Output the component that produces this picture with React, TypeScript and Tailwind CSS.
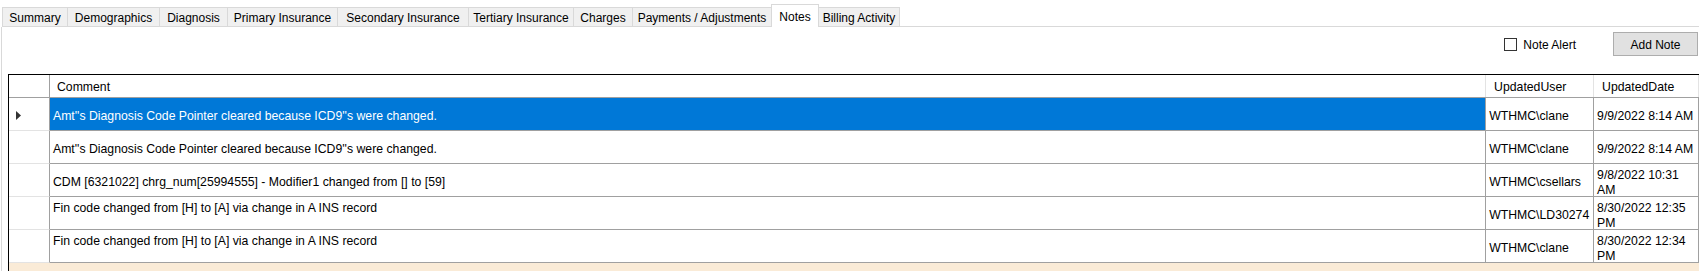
import React from "react";

const tabs: { label: string; w: string; first?: boolean; sel?: boolean }[] = [
  { label: "Summary", w: "w-[66px]", first: true },
  { label: "Demographics", w: "w-[92px]" },
  { label: "Diagnosis", w: "w-[68px]" },
  { label: "Primary Insurance", w: "w-[110px]" },
  { label: "Secondary Insurance", w: "w-[131px]" },
  { label: "Tertiary Insurance", w: "w-[105px]" },
  { label: "Charges", w: "w-[59px]" },
  { label: "Payments / Adjustments", w: "w-[139px]" },
  { label: "Notes", w: "w-[48px]", sel: true },
  { label: "Billing Activity", w: "w-[81px]" },
];

type Row = { comment: string[]; user: string; date: string[]; selected?: boolean };

const rows: Row[] = [
  { comment: ["Amt''s Diagnosis Code Pointer cleared because ICD9''s were changed."], user: "WTHMC\\clane", date: ["9/9/2022 8:14 AM"], selected: true },
  { comment: ["Amt''s Diagnosis Code Pointer cleared because ICD9''s were changed."], user: "WTHMC\\clane", date: ["9/9/2022 8:14 AM"] },
  { comment: ["CDM [6321022] chrg_num[25994555] - Modifier1 changed from [] to [59]"], user: "WTHMC\\csellars", date: ["9/8/2022 10:31", "AM"] },
  { comment: ["Fin code changed from [H] to [A] via change in A INS record", "\u00a0"], user: "WTHMC\\LD30274", date: ["8/30/2022 12:35", "PM"] },
  { comment: ["Fin code changed from [H] to [A] via change in A INS record", "\u00a0"], user: "WTHMC\\clane", date: ["8/30/2022 12:34", "PM"] },
];

function Lines({ lines }: { lines: string[] }) {
  return (
    <div className="flex flex-col leading-[15px] whitespace-nowrap">
      {lines.map((l, i) => (
        <span key={i}>{l}</span>
      ))}
    </div>
  );
}

export default function App() {
  return (
    <div className="w-[1699px] h-[271px] overflow-hidden bg-white text-[12px] text-black font-['Liberation_Sans',Arial,sans-serif] flex flex-col">
      {/* Tab strip */}
      <div className="flex items-end h-[27px] pl-[2px] shrink-0">
        {tabs.map((t) =>
          t.sel ? (
            <div
              key={t.label}
              className={`${t.w} h-[23px] bg-white border-t border-l border-r border-[#d9d9d9] flex items-start justify-center pt-[3px] -ml-px`}
            >
              {t.label}
            </div>
          ) : (
            <div
              key={t.label}
              className={`${t.w} h-[20px] bg-[#f0f0f0] border-t border-r border-b border-[#d9d9d9] ${t.first ? "border-l" : ""} flex items-center justify-center pt-[2px]`}
            >
              {t.label}
            </div>
          )
        )}
        <div className="flex-1 h-full border-b border-[#d9d9d9]" />
      </div>

      {/* Panel */}
      <div className="flex-1 ml-px border-l border-[#d9d9d9] flex flex-col min-h-0">
        {/* Toolbar */}
        <div className="h-[47px] shrink-0 flex justify-end items-start pt-[5px] pr-px">
          <div className="flex items-center h-[24px]">
            <div className="w-[13px] h-[13px] border border-[#333333] bg-white" />
            <span className="ml-[6px] pt-[2px]">Note Alert</span>
            <button className="ml-[37px] w-[85px] h-[24px] bg-[#e1e1e1] border border-[#adadad] flex items-center justify-center pt-[1px]">
              Add Note
            </button>
          </div>
        </div>

        {/* Grid */}
        <div className="ml-[6px] flex-1 border-t border-l border-black bg-[#faebd7] flex flex-col text-[12.25px]">
          {/* Header */}
          <div className="flex h-[23px] bg-white border-b border-[#a0a0a0] shrink-0">
            <div className="w-[41px] border-r border-[#a0a0a0]" />
            <div className="w-[1437px] border-r border-[#e3e3e3] flex items-center pl-[7px] pt-[3px]">Comment</div>
            <div className="w-[108px] border-r border-[#e3e3e3] flex items-center pl-[8px] pt-[3px]">UpdatedUser</div>
            <div className="w-[105px] border-r border-[#e3e3e3] flex items-center pl-[8px] pt-[3px]">UpdatedDate</div>
          </div>
          {rows.map((r, i) => (
            <div key={i} className="flex h-[33px] shrink-0">
              <div className="w-[41px] bg-white border-r border-[#a0a0a0] border-b border-b-[#e3e3e3] flex items-center pl-[7px]">
                {r.selected && (
                  <svg width="5" height="9" viewBox="0 0 5 9" className="mt-[2px]">
                    <path d="M0 0 L5 4.5 L0 9 Z" fill="#333333" />
                  </svg>
                )}
              </div>
              <div
                className={`w-[1437px] border-r border-b border-[#a0a0a0] flex items-center pl-[3px] pt-[5px] ${
                  r.selected ? "bg-[#0078d7] text-white" : "bg-white"
                }`}
              >
                <Lines lines={r.comment} />
              </div>
              <div className="w-[108px] bg-white border-r border-b border-[#a0a0a0] flex items-center pl-[3px] pt-[5px]">
                <Lines lines={[r.user]} />
              </div>
              <div className="w-[105px] bg-white border-r border-b border-[#a0a0a0] flex items-center pl-[3px] pt-[5px]">
                <Lines lines={r.date} />
              </div>
            </div>
          ))}
        </div>
      </div>
    </div>
  );
}
